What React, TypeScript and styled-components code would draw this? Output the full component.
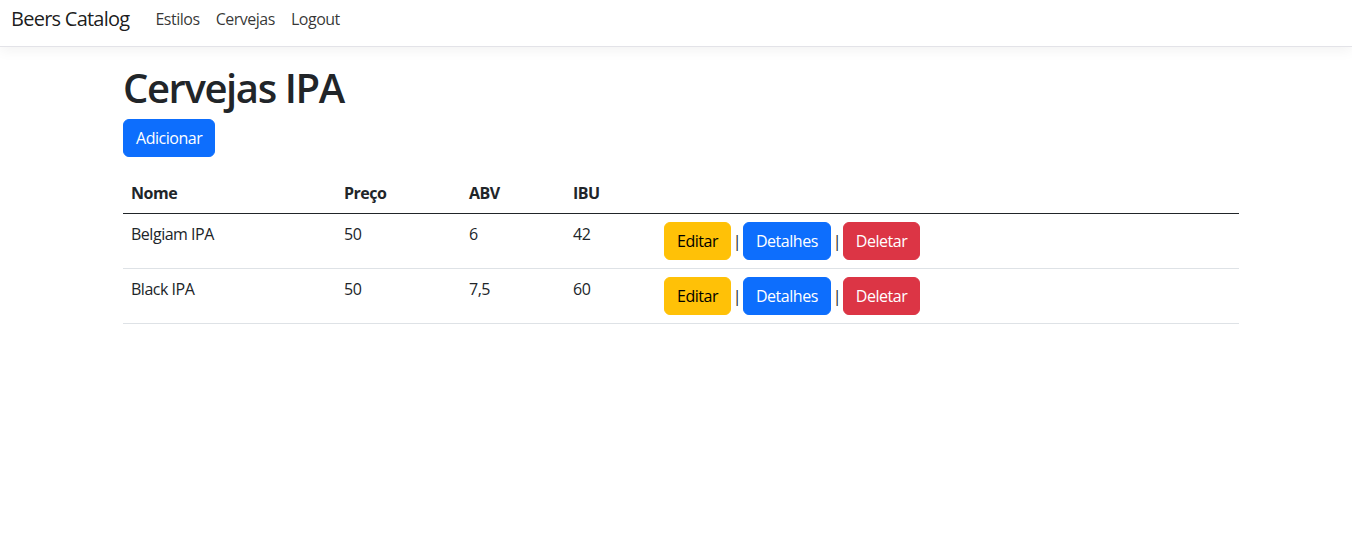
import React from "react";
import styled, { createGlobalStyle } from "styled-components";

const Global = createGlobalStyle`
  html, body { margin: 0; padding: 0; background: #fff; }
  body {
    font-family: "Open Sans", "Noto Sans", sans-serif;
    font-size: 16px;
    line-height: 1.5;
    color: #212529;
    letter-spacing: -0.03em;
  }
  * { box-sizing: border-box; }
`;

const Navbar = styled.nav`
  height: 47px;
  display: flex;
  align-items: center;
  padding: 0 11px;
  border-bottom: 1px solid #e3e3e8;
  box-shadow: 0 4px 12px rgba(0, 0, 0, 0.05);
`;

const Brand = styled.a`
  font-size: 20px;
  letter-spacing: -0.75px;
  color: rgba(0, 0, 0, 0.9);
  text-decoration: none;
  margin-right: 18px;
  margin-top: -8px;
`;

const NavList = styled.div`
  display: flex;
  margin-top: -8px;
`;

const NavLink = styled.a`
  padding: 0 8px;
  color: rgba(0, 0, 0, 0.8);
  text-decoration: none;
  font-size: 16px;
`;

const Container = styled.main`
  width: 1116px;
  margin-left: 123px;
  padding-top: 17px;
`;

const Title = styled.h1`
  font-size: 40px;
  font-weight: 600;
  letter-spacing: -1.4px;
  line-height: 1.2;
  margin: 0 0 7px;
`;

const Button = styled.button<{ $variant: "primary" | "warning" | "danger" }>`
  font-family: inherit;
  letter-spacing: inherit;
  font-size: 16px;
  line-height: 24px;
  padding: 6px 12px;
  border: 1px solid transparent;
  border-radius: 6px;
  cursor: pointer;
  background: ${(p) =>
    p.$variant === "primary" ? "#0d6efd" : p.$variant === "warning" ? "#ffc107" : "#dc3545"};
  border-color: ${(p) =>
    p.$variant === "primary" ? "#0d6efd" : p.$variant === "warning" ? "#ffc107" : "#dc3545"};
  color: ${(p) => (p.$variant === "warning" ? "#000" : "#fff")};
`;

const Table = styled.table`
  width: 100%;
  margin-top: 16px;
  border-collapse: collapse;
  color: #212529;
`;

const Th = styled.th<{ $w?: number }>`
  text-align: left;
  font-weight: 700;
  padding: 8px;
  vertical-align: bottom;
  border-bottom: 1px solid #212529;
  width: ${(p) => (p.$w ? `${p.$w}px` : "auto")};
`;

const Td = styled.td`
  padding: 8px;
  vertical-align: top;
  border-bottom: 1px solid #dee2e6;
`;

const Sep = styled.span`
  display: inline-block;
  width: 12px;
  text-align: center;
`;

const beers = [
  { nome: "Belgiam IPA", preco: "50", abv: "6", ibu: "42" },
  { nome: "Black IPA", preco: "50", abv: "7,5", ibu: "60" },
];

export default function App() {
  return (
    <>
      <Global />
      <Navbar>
        <Brand href="#">Beers Catalog</Brand>
        <NavList>
          <NavLink href="#">Estilos</NavLink>
          <NavLink href="#">Cervejas</NavLink>
          <NavLink href="#">Logout</NavLink>
        </NavList>
      </Navbar>
      <Container>
        <Title>Cervejas IPA</Title>
        <Button $variant="primary">Adicionar</Button>
        <Table>
          <thead>
            <tr>
              <Th $w={213}>Nome</Th>
              <Th $w={125}>Preço</Th>
              <Th $w={104}>ABV</Th>
              <Th $w={91}>IBU</Th>
              <Th></Th>
            </tr>
          </thead>
          <tbody>
            {beers.map((b) => (
              <tr key={b.nome}>
                <Td>{b.nome}</Td>
                <Td>{b.preco}</Td>
                <Td>{b.abv}</Td>
                <Td>{b.ibu}</Td>
                <Td>
                  <Button $variant="warning">Editar</Button>
                  <Sep>|</Sep>
                  <Button $variant="primary">Detalhes</Button>
                  <Sep>|</Sep>
                  <Button $variant="danger">Deletar</Button>
                </Td>
              </tr>
            ))}
          </tbody>
        </Table>
      </Container>
    </>
  );
}
